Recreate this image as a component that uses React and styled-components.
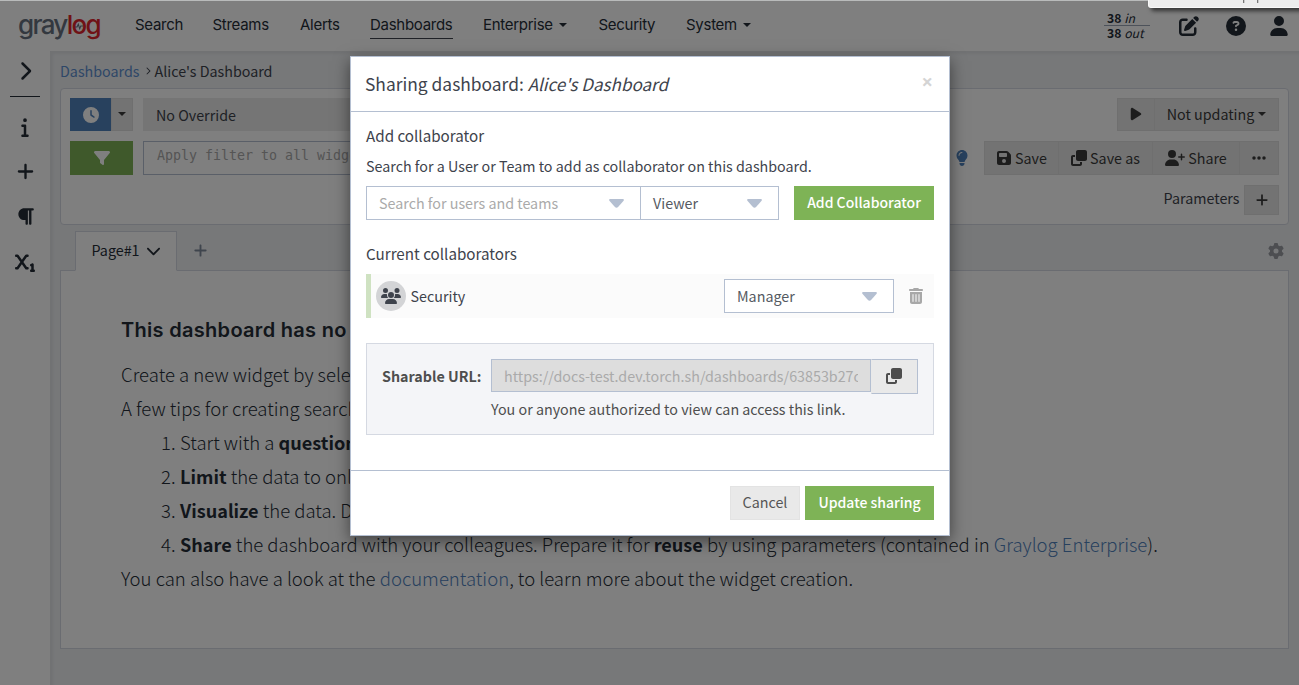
import React from 'react';
import styled, { createGlobalStyle, css } from 'styled-components';
import {
  FaChevronRight, FaInfo, FaPlus, FaParagraph, FaSubscript, FaPenToSquare, FaCircleQuestion, FaUser,
  FaPlay, FaFloppyDisk, FaClone, FaUserPlus, FaEllipsis, FaLightbulb, FaGear, FaFilter, FaClock,
  FaChevronDown, FaUsers, FaTrashCan,
} from 'react-icons/fa6';

const Global = createGlobalStyle`
  *, *::before, *::after { box-sizing: border-box; }
  html, body { margin: 0; height: 100%; overflow: hidden; }
  body {
    font-family: "Noto Sans CJK SC", "Open Sans", sans-serif;
    font-size: 14.3px;
    line-height: 20px;
    color: #3e434c;
    background: #fff;
    white-space: nowrap;
  }
  svg { display: block; flex: none; }
`;

const Page = styled.div`
  position: relative;
  width: 1299px;
  height: 685px;
  overflow: hidden;
  display: flex;
  flex-direction: column;
`;

/* ---------- navigation ---------- */
const Navbar = styled.header`
  height: 51px;
  flex: none;
  display: flex;
  align-items: center;
  padding: 0 10px 0 18px;
  background: #fff;
  font-family: "Inter", sans-serif;
  font-size: 15px;
  color: #252d37;
`;
const Logo = styled.div`
  position: relative;
  width: 117px;
  margin-bottom: 2px;
  font-size: 26px;
  font-weight: 500;
  line-height: 30px;
  letter-spacing: -1.7px;
  color: #66707f;
  b { font-weight: 500; color: #e0242c; }
  svg { position: absolute; left: 57px; top: 12px; }
`;
const NavItem = styled.a`
  display: flex;
  align-items: center;
  height: 27px;
  margin-right: 30px;
  width: ${(p) => p.$w}px;
  letter-spacing: -0.28px;
  border-bottom: 1px solid ${(p) => (p.$active ? '#3e434c' : 'transparent')};
`;
const Caret = styled.i`
  margin-left: ${(p) => p.$ml || 6}px;
  border: 4px solid transparent;
  border-top-color: currentColor;
  border-bottom: 0;
`;
const Throughput = styled.div`
  margin-left: auto;
  width: 46px;
  padding-left: 3px;
  font-family: "Noto Sans CJK SC", sans-serif;
  font-size: 12.2px;
  line-height: 14px;
  div:first-child { border-bottom: 1px solid #9aa5b5; margin-left: -3px; padding-left: 3px; height: 15px; }
`;
const NavIcons = styled.div`
  display: flex;
  align-items: center;
  gap: 27px;
  margin-left: 29px;
  svg:last-child { margin-left: -4px; }
`;

/* ---------- body ---------- */
const Body = styled.div`
  display: flex;
  flex: 1;
  min-height: 0;
`;
const Sidebar = styled.nav`
  width: 50px;
  flex: none;
  display: flex;
  flex-direction: column;
  align-items: center;
  color: #252d37;
`;
const SideIcon = styled.div`
  height: 45px;
  display: flex;
  align-items: center;
  justify-content: center;
  padding-bottom: ${(p) => (p.$toggle ? 5 : 0)}px;
`;
const SideDivider = styled.div`
  width: 30px;
  height: 1px;
  background: #252d37;
  margin-bottom: 7px;
`;
const Main = styled.main`
  flex: 1;
  min-width: 0;
  padding: 9px 10px 0;
  background: #eef0f3;
  box-shadow: inset 3px 3px 3px rgba(0, 0, 0, 0.05);
`;
const Breadcrumb = styled.div`
  display: flex;
  align-items: center;
  height: 22px;
  margin-bottom: 6px;
  a { color: #5d8fd0; }
  svg { margin: 0 3px 0 4px; }
`;
const SearchCard = styled.section`
  width: 1229px;
  height: 137px;
  padding: 9px;
  border: 1px solid #d5d9e2;
  border-radius: 4px;
  background: #fff;
  display: flex;
  flex-direction: column;
`;
const Row = styled.div`
  display: flex;
  flex: none;
  justify-content: ${(p) => p.$justify || 'flex-start'};
  height: ${(p) => p.$h}px;
  margin-bottom: ${(p) => p.$mb || 10}px;
`;
const center = css`
  display: flex;
  align-items: center;
  justify-content: center;
`;
const ColorButton = styled.div`
  ${center}
  width: ${(p) => p.$w}px;
  background: ${(p) => p.$bg};
  color: #fff;
`;
const GreyButton = styled.div`
  ${center}
  gap: 3px;
  padding-bottom: 1px;
  width: ${(p) => p.$w}px;
  background: #e7e7e7;
  border: 1px solid #dfdfdf;
  margin-left: ${(p) => (p.$joined ? -1 : 0)}px;
  color: #3b3b3b;
`;
const Override = styled.div`
  width: 600px;
  display: flex;
  align-items: center;
  margin: 0 10px;
  padding-left: 13px;
  background: #eaeaea;
`;
const Query = styled.div`
  width: 800px;
  margin-left: 10px;
  padding: 4px 0 0 13px;
  border: 1px solid #b4bfd1;
  font-family: "DejaVu Sans Mono", monospace;
  font-size: 13.3px;
  color: #aaa;
`;
const Push = styled.div`
  margin-left: auto;
  display: flex;
`;
const Bulb = styled.div`
  ${center}
  color: #5082bc;
  margin-right: 14px;
`;
const ParamLabel = styled.span`
  margin: 3px 4.5px 0 0;
`;
const Tabs = styled.div`
  display: flex;
  align-items: flex-end;
  height: 45px;
  padding-left: 15px;
  padding-right: 5px;
`;
const Tab = styled.div`
  position: relative;
  ${center}
  gap: 6px;
  width: 102px;
  height: 40px;
  margin-bottom: -1px;
  padding-bottom: 2px;
  border: 1px solid #d5d9e2;
  border-bottom-color: #fff;
  background: #fff;
  color: #252d37;
`;
const TabAction = styled.div`
  height: 39px;
  display: flex;
  align-items: center;
  color: ${(p) => p.$color};
  margin-left: ${(p) => p.$ml};
`;
const Panel = styled.section`
  width: 1229px;
  height: 379px;
  padding: 42px 60px 0;
  background: #fff;
  border: 1px solid #d5d9e2;
  font-size: 18.56px;
  font-weight: 300;
  line-height: 34px;
  color: #252d37;
  a { color: #5082bc; }
  b { font-weight: 700; font-size: 18.1px; }
  p { margin: 0; }
`;
const PanelTitle = styled.h2`
  margin: 0 0 10px;
  font: 600 20px/34px "Inter", sans-serif;
  letter-spacing: 0.3px;
`;
const Tips = styled.div`
  display: grid;
  grid-template-columns: 19px 1fr;
  padding-left: 40px;
`;

/* ---------- overlay and dialog ---------- */
const Overlay = styled.div`
  position: absolute;
  inset: 0;
  background: rgba(0, 0, 0, 0.5);
  border-top: 1px solid #b9bbbb;
`;
const Hint = styled.div`
  position: absolute;
  top: 0;
  left: 1148px;
  width: 160px;
  height: 8px;
  background: #ececec;
  border: 1px solid #f8f8f8;
  border-top: 0;
  border-radius: 0 0 0 3px;
  box-shadow: 3px 3px 4px rgba(0, 0, 0, 0.6);
  svg { position: absolute; left: 94px; top: 0; }
`;
const Dialog = styled.div`
  position: absolute;
  left: 350px;
  top: 56px;
  width: 600px;
  height: 480px;
  display: flex;
  flex-direction: column;
  background: #fff;
  border: 1px solid #b4bfd1;
  box-shadow: 0 5px 15px rgba(0, 0, 0, 0.5);
`;
const DialogHeader = styled.div`
  height: 55px;
  display: flex;
  align-items: center;
  justify-content: space-between;
  padding: 0 16px 0 14px;
  border-bottom: 1px solid #b4bfd1;
  font-size: 17.4px;
  line-height: 24px;
  i { font-size: 17px; }
`;
const Close = styled.span`
  font: 700 20px/20px "Open Sans", sans-serif;
  color: #d4d4d4;
  margin-bottom: 5px;
`;
const DialogBody = styled.div`
  flex: 1;
  padding: 14px 15px 15px;
  display: flex;
  flex-direction: column;
`;
const Line = styled.div`
  height: 20px;
  margin-bottom: ${(p) => p.$mb}px;
  font-size: ${(p) => (p.$heading ? 15.2 : 14.3)}px;
  line-height: ${(p) => (p.$heading ? 18 : 20)}px;
`;
const Select = styled.div`
  display: flex;
  align-items: center;
  justify-content: space-between;
  width: ${(p) => p.$w}px;
  height: 34px;
  padding: 0 16px 0 12px;
  margin-left: ${(p) => (p.$joined ? -1 : 0)}px;
  border: 1px solid #b4bfd1;
  background: #fff;
  color: ${(p) => (p.$muted ? '#aaaaaa' : '#555a62')};
`;
const Button = styled.div`
  ${center}
  width: ${(p) => p.$w}px;
  height: 34px;
  padding-bottom: 2px;
  border: 1px solid ${(p) => (p.$primary ? '#7eb356' : '#e3e3e3')};
  background: ${(p) => (p.$primary ? '#7eb356' : '#e9e9e9')};
  color: ${(p) => (p.$primary ? '#fff' : '#555')};
  font-weight: ${(p) => (p.$primary ? 500 : 400)};
  font-size: ${(p) => (p.$primary ? 14 : 14.3)}px;
`;
const Grantee = styled.div`
  display: flex;
  align-items: center;
  height: 44px;
  margin-bottom: 25px;
  padding: 0 10px 0 5px;
  border-left: 5px solid #cfe2c2;
  background: #fbfbfb;
`;
const Avatar = styled.div`
  ${center}
  width: 30px;
  height: 30px;
  border-radius: 50%;
  background: #d3d4d6;
  margin-right: 4.5px;
`;
const Trash = styled.div`
  margin-left: 14px;
  color: #a8a8a8;
`;
const UrlPanel = styled.div`
  height: 92px;
  display: grid;
  grid-template-columns: 109px 380px 47px;
  grid-template-rows: 35px 31px;
  padding: 15px;
  background: #f4f5f8;
  border: 1px solid #d5d9e2;
  color: #4e4e4e;
`;
const UrlLabel = styled.b`
  align-self: center;
  padding-bottom: 2px;
`;
const UrlInput = styled.div`
  height: 33px;
  padding: 6px 12px;
  border: 1px solid #b4bfd1;
  background: #ddd;
  color: #aaa;
`;
const UrlText = styled.div`
  overflow: hidden;
`;
const CopyButton = styled.div`
  ${center}
  height: 35px;
  padding-bottom: 1px;
  padding-right: 1px;
  border: 1px solid #b4bfd1;
  border-left-color: #e9e9e9;
  background: #e9e9e9;
  color: #4e4e4e;
`;
const UrlHelp = styled.div`
  grid-column: 2 / 4;
  padding-top: 5px;
`;
const DialogFooter = styled.div`
  height: 65px;
  display: flex;
  justify-content: flex-end;
  gap: 5px;
  padding: 15px;
  border-top: 1px solid #b4bfd1;
`;

const Arrow = () => (
  <svg width="15" height="9" viewBox="0 0 15 9">
    <path d="M1 0h13q1.3.3.6 1.7L9.3 7.8q-1.8 2-3.6 0L.4 1.7Q-.3.3 1 0z" fill="#b4bfd1" />
  </svg>
);

const tips = [
  ['1.', <>Start with a <b>question</b>. What do you want to know?</>],
  ['2.', <><b>Limit</b> the data to only the data points you want to see.</>],
  ['3.', <><b>Visualize</b> the data. Does it answer your question?</>],
  ['4.', <><b>Share</b> the dashboard with your colleagues. Prepare it for <b>reuse</b> by using parameters (contained in <a>Graylog Enterprise</a>).</>],
];

export default function App() {
  return (
    <Page>
      <Global />
      <Navbar>
        <Logo>
          gray<b>log</b>
          <svg width="8" height="9" viewBox="0 0 9 9" fill="none" stroke="#66707f" strokeWidth="1.2">
            <path d="M0 5h2.3L3.7 2l1.6 5 1.2-3H9" />
          </svg>
        </Logo>
        <NavItem $w={47.5}>Search</NavItem>
        <NavItem $w={57.5}>Streams</NavItem>
        <NavItem $w={40}>Alerts</NavItem>
        <NavItem $w={83} $active>Dashboards</NavItem>
        <NavItem $w={85.5}>Enterprise<Caret /></NavItem>
        <NavItem $w={57.5}>Security</NavItem>
        <NavItem $w={66}>System<Caret /></NavItem>
        <Throughput>
          <div><b>38</b> <i>in</i></div>
          <div><b>38</b> <i>out</i></div>
        </Throughput>
        <NavIcons>
          <FaPenToSquare size={20} />
          <FaCircleQuestion size={20} />
          <FaUser size={20} />
        </NavIcons>
      </Navbar>
      <Body>
        <Sidebar>
          <SideIcon $toggle><FaChevronRight size={20} /></SideIcon>
          <SideDivider />
          <SideIcon><FaInfo size={20} /></SideIcon>
          <SideIcon><FaPlus size={19} /></SideIcon>
          <SideIcon><FaParagraph size={19} /></SideIcon>
          <SideIcon><FaSubscript size={20} /></SideIcon>
        </Sidebar>
        <Main>
          <Breadcrumb><a>Dashboards</a><FaChevronRight size={8} />Alice's Dashboard</Breadcrumb>
          <SearchCard>
            <Row $h={33}>
              <ColorButton $w={41} $bg="#5082bc"><FaClock size={16} /></ColorButton>
              <GreyButton $w={22}><Caret $ml={-1} /></GreyButton>
              <Override>No Override</Override>
              <Push>
                <GreyButton $w={38}><FaPlay size={14} /></GreyButton>
                <GreyButton $w={125} $joined>Not updating<Caret $ml={1} /></GreyButton>
              </Push>
            </Row>
            <Row $h={34}>
              <ColorButton $w={63} $bg="#7eb356"><FaFilter size={16} /></ColorButton>
              <Query>Apply filter to all widgets</Query>
              <Push>
                <Bulb><FaLightbulb size={16} /></Bulb>
                <GreyButton $w={75}><FaFloppyDisk size={16} />Save</GreyButton>
                <GreyButton $w={95} $joined><FaClone size={16} />Save as</GreyButton>
                <GreyButton $w={88} $joined><FaUserPlus size={20} />Share</GreyButton>
                <GreyButton $w={40} $joined><FaEllipsis size={16} /></GreyButton>
              </Push>
            </Row>
            <Row $h={30} $justify="flex-end">
              <ParamLabel>Parameters</ParamLabel>
              <GreyButton $w={35}><FaPlus size={14} /></GreyButton>
            </Row>
          </SearchCard>
          <Tabs>
            <Tab>Page#1 <FaChevronDown size={15} /></Tab>
            <TabAction $ml="16px" $color="#7f8a9b"><FaPlus size={15} /></TabAction>
            <TabAction $ml="auto" $color="#9a9da3"><FaGear size={16} /></TabAction>
          </Tabs>
          <Panel>
            <PanelTitle>This dashboard has no widgets yet</PanelTitle>
            <p>Create a new widget by selecting a widget type.</p>
            <p>A few tips for creating searches and dashboards:</p>
            <Tips>
              {tips.map(([n, text]) => (
                <React.Fragment key={n}><span>{n}</span><div>{text}</div></React.Fragment>
              ))}
            </Tips>
            <p>You can also have a look at the <a>documentation</a>, to learn more about the widget creation.</p>
          </Panel>
        </Main>
      </Body>

      <Overlay />
      <Hint>
        <svg width="18" height="4" viewBox="0 0 18 4" fill="#777"><rect x="0" width="1.3" height="3" /><rect x="14" width="1.3" height="3" /></svg>
      </Hint>

      <Dialog>
        <DialogHeader>
          <span>Sharing dashboard: <i>Alice's Dashboard</i></span>
          <Close>×</Close>
        </DialogHeader>
        <DialogBody>
          <Line $mb={10} $heading>Add collaborator</Line>
          <Line $mb={10}>Search for a User or Team to add as collaborator on this dashboard.</Line>
          <Row $h={34} $mb={24}>
            <Select $w={275} $muted>Search for users and teams<Arrow /></Select>
            <Select $w={139} $joined>Viewer<Arrow /></Select>
            <Push><Button $w={140} $primary>Add Collaborator</Button></Push>
          </Row>
          <Line $mb={10} $heading>Current collaborators</Line>
          <Grantee>
            <Avatar><FaUsers size={20} /></Avatar>
            Security
            <Push><Select $w={170}>Manager<Arrow /></Select></Push>
            <Trash><FaTrashCan size={16} /></Trash>
          </Grantee>
          <UrlPanel>
            <UrlLabel>Sharable URL:</UrlLabel>
            <UrlInput><UrlText>https://docs-test.dev.torch.sh/dashboards/63853b27d41</UrlText></UrlInput>
            <CopyButton><FaClone size={16} /></CopyButton>
            <UrlHelp>You or anyone authorized to view can access this link.</UrlHelp>
          </UrlPanel>
        </DialogBody>
        <DialogFooter>
          <Button $w={70}>Cancel</Button>
          <Button $w={129} $primary>Update sharing</Button>
        </DialogFooter>
      </Dialog>
    </Page>
  );
}
